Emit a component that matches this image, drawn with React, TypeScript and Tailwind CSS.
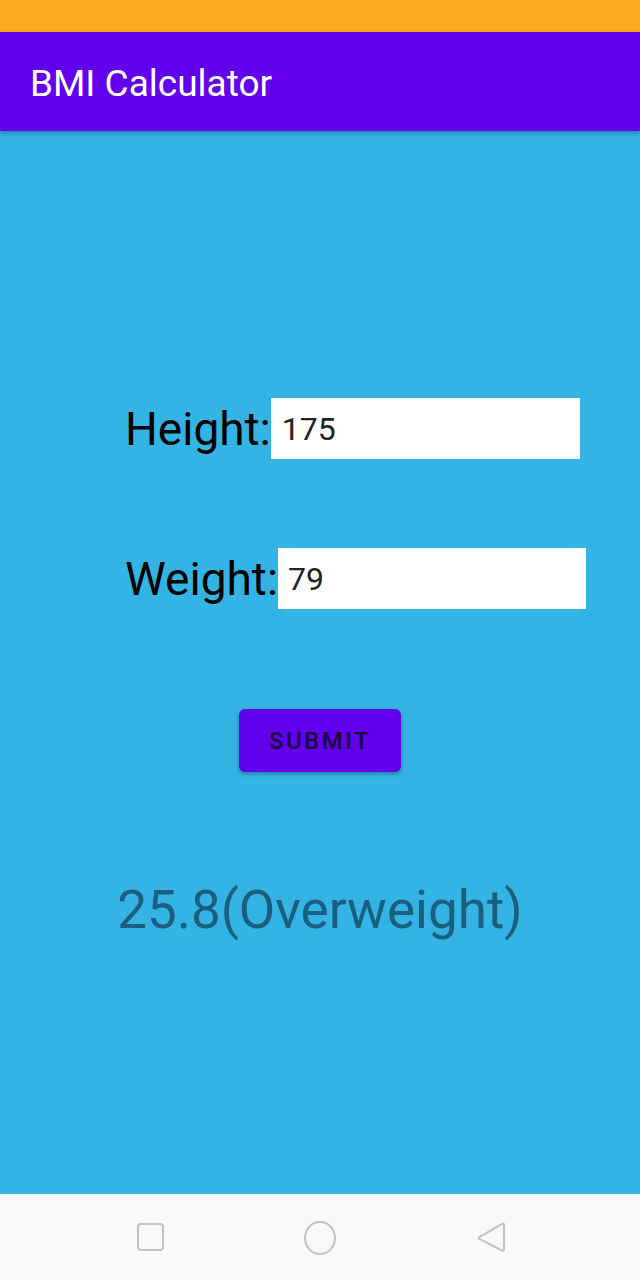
import React from "react";

export default function App() {
  return (
    <div className="w-[640px] h-[1280px] flex flex-col font-['Roboto',sans-serif] overflow-hidden">
      <div className="h-[32px] bg-[#FFAB1F] shrink-0" />
      <div className="h-[99px] bg-[#6200EE] shrink-0 flex items-center pl-[30px] pt-[4px] relative z-10 shadow-[0_2px_4px_rgba(0,0,0,0.3)]">
        <span className="text-white text-[37px] leading-none">BMI Calculator</span>
      </div>
      <div className="flex-1 bg-[#34B4E4] flex flex-col pt-[267px]">
        <div className="flex items-center pl-[125px]">
          <span className="text-black text-[46px] leading-none">Height:</span>
          <div className="w-[309px] h-[61px] bg-white flex items-center pl-[11px]">
            <span className="text-[#222] text-[32px] leading-none">175</span>
          </div>
        </div>
        <div className="flex items-center pl-[125px] mt-[89px]">
          <span className="text-black text-[46px] leading-none">Weight:</span>
          <div className="w-[308px] h-[61px] bg-white flex items-center pl-[10px]">
            <span className="text-[#222] text-[32px] leading-none">79</span>
          </div>
        </div>
        <div className="flex justify-center mt-[100px]">
          <div className="w-[162px] h-[63px] rounded-[6px] bg-[#6200EE] flex items-center justify-center shadow-[0_2px_4px_rgba(0,0,0,0.3)]">
            <span className="text-[#1a0b3a] text-[24px] font-medium tracking-[0.1em] leading-none">SUBMIT</span>
          </div>
        </div>
        <div className="flex justify-center mt-[112px]">
          <span className="text-[#1c5e7e] text-[53px] leading-none">25.8(Overweight)</span>
        </div>
      </div>
      <div className="h-[86px] bg-[#F8F8F8] shrink-0 flex items-center">
        <div className="w-full relative h-full">
          <svg className="absolute left-[136px] top-[28px]" width="30" height="30" viewBox="0 0 30 30">
            <rect x="2" y="2" width="25" height="26" rx="3" fill="none" stroke="#c2c2c2" strokeWidth="2" />
          </svg>
          <svg className="absolute left-[302px] top-[26px]" width="36" height="36" viewBox="0 0 36 36">
            <ellipse cx="18" cy="18" rx="15" ry="16" fill="none" stroke="#c2c2c2" strokeWidth="2" />
          </svg>
          <svg className="absolute left-[476px] top-[27px]" width="32" height="34" viewBox="0 0 32 34">
            <path d="M3.5 16.2 L26 2.8 Q28 1.8 28 4 L28 28.5 Q28 30.6 26 29.6 L3.5 17.8 Q2.2 17 3.5 16.2 Z" fill="none" stroke="#c2c2c2" strokeWidth="2" strokeLinejoin="round" />
          </svg>
        </div>
      </div>
    </div>
  );
}
